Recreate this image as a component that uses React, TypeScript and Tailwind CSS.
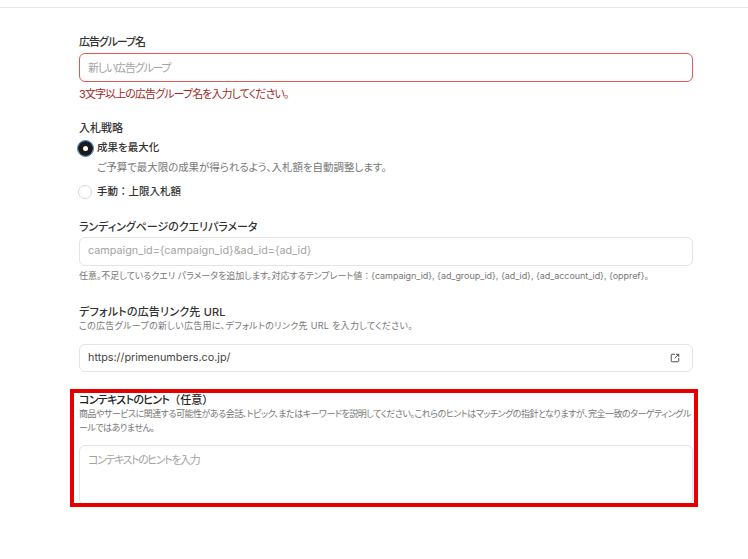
import { SquareArrowOutUpRight } from "lucide-react";

const font = "font-['Inter','Noto_Sans_CJK_JP',sans-serif] [font-feature-settings:'palt']";

export default function App() {
  return (
    <div className={`relative h-[559px] w-[748px] overflow-hidden bg-white ${font}`}>
      <div className="h-2 border-b border-[#e8e8e8]" />

      <div className="ml-[79px] flex w-[614px] flex-col pt-[25px]">
        {/* ad group name */}
        <label className="h-[18px] text-[11px] leading-[18px] font-medium tracking-[-1.1px] text-[#333]">広告グループ名</label>
        <div className="mt-[2px] flex h-[29px] items-center rounded-md border border-[#dc5a5a] px-[8px] pt-[1px] text-[11px] tracking-[-1.2px] text-[#a3a3a3]">
          新しい広告グループ
        </div>
        <p className="mt-[3px] h-[18px] text-[11px] leading-[18px] tracking-[-0.9px] text-[#a02a2a]">3文字以上の広告グループ名を入力してください。</p>

        {/* bid strategy */}
        <label className="mt-[16px] h-[18px] text-[11px] leading-[18px] font-medium text-[#333]">入札戦略</label>
        <div className="mt-[1px] flex h-[20px] items-center gap-[3px]">
          <span className="-ml-[2px] flex size-[17px] items-center justify-center rounded-full border border-[#1f7ae0] bg-white">
            <span className="flex size-[15px] items-center justify-center rounded-full bg-[#1a1a1a]">
              <span className="size-[5px] rounded-full bg-white" />
            </span>
          </span>
          <span className="text-[10.5px] font-medium text-[#333]">成果を最大化</span>
        </div>
        <p className="mt-[1px] ml-[18px] h-[18px] text-[10.5px] leading-[18px] tracking-[-0.05px] text-[#777]">
          ご予算で最大限の成果が得られるよう、入札額を自動調整します。
        </p>
        <div className="mt-[5px] flex h-[20px] items-center gap-[5px]">
          <span className="-ml-[1px] size-[14px] rounded-full border border-[#d8d8d8] bg-white" />
          <span className="text-[10.5px] font-medium text-[#333]">
            手動<span className="[font-feature-settings:normal]">：</span>上限入札額
          </span>
        </div>

        {/* query params */}
        <label className="mt-[16px] h-[18px] text-[11px] leading-[18px] font-medium tracking-[-0.05px] text-[#333]">ランディングページのクエリパラメータ</label>
        <div className="mt-[1px] flex h-[29px] items-center rounded-md border border-[#e4e4e4] px-[8px] text-[10.8px] text-[#a3a3a3]">
          campaign_id={"{campaign_id}"}&amp;ad_id={"{ad_id}"}
        </div>
        <p className="mt-[2px] h-[16px] text-[9px] leading-[16px] tracking-[-0.05px] whitespace-nowrap text-[#777]">
          任意。不足しているクエリ パラメータを追加します。対応するテンプレート値<span className="[font-feature-settings:normal]">：</span>{"{campaign_id}, {ad_group_id}, {ad_id}, {ad_account_id}, {oppref}"}。
        </p>

        {/* default url */}
        <label className="mt-[20px] h-[16px] text-[11px] leading-[16px] font-medium tracking-[0.2px] text-[#333]">デフォルトの広告リンク先 URL</label>
        <p className="-mt-[1px] h-[13px] text-[9px] leading-[13px] tracking-[0.3px] text-[#777]">この広告グループの新しい広告用に、デフォルトのリンク先 URL を入力してください。</p>
        <div className="mt-[12px] flex h-[28px] items-center justify-between rounded-md border border-[#e4e4e4] pr-[12px] pl-[8px] text-[10.8px] text-[#444]">
          <span>https://primenumbers.co.jp/</span>
          <SquareArrowOutUpRight className="size-[10px] text-[#444]" strokeWidth={2.2} />
        </div>

        {/* context hint */}
        <label className="mt-[20px] h-[15px] text-[11px] leading-[16px] font-medium text-[#222]">
          <span className="tracking-[-0.7px]">コンテキストのヒント</span>
          <span className="[font-feature-settings:normal]">（任意）</span>
        </label>
        <p className="h-[28px] text-[9px] leading-[14px] tracking-[-0.5px] text-[#777] [line-break:anywhere]">
          商品やサービスに関連する可能性がある会話、トピック、またはキーワードを説明してください。これらのヒントはマッチングの指針となりますが、完全一致のターゲティングルールではありません。
        </p>
        <div className="mt-[10px] h-[60px] rounded-md border border-[#e4e4e4] px-[8px] pt-[6px] text-[11px] tracking-[-1.4px] text-[#a3a3a3]">
          コンテキストのヒントを入力
        </div>
      </div>

      {/* red annotation over the page */}
      <div className="absolute top-[389px] left-[70px] h-[118px] w-[628px] border-4 border-[#e60000]" />
    </div>
  );
}
